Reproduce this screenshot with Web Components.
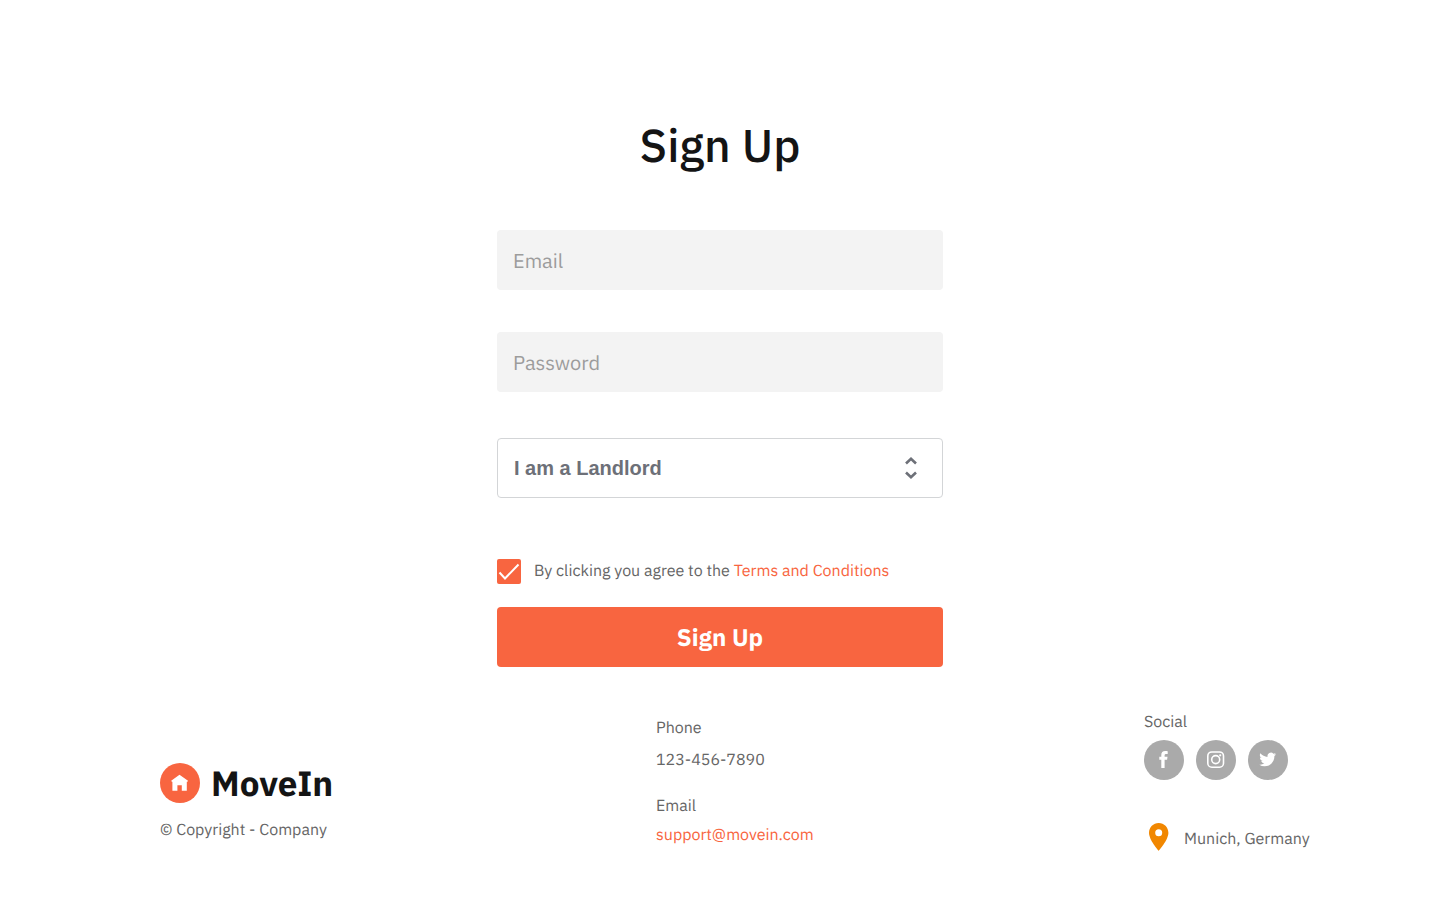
<!DOCTYPE html>
<html lang="en">
<head>
<meta charset="utf-8">
<meta name="viewport" content="width=device-width, initial-scale=1">
<title>MoveIn - Sign Up</title>
<style>
  :root { --accent: #f86540; --ink: #141414; --muted: #666; --hint: #9c9c9c; }
  body {
    margin: 0;
    background: #fff;
    color: var(--muted);
    font: 16px/20px "IBM Plex Sans", Roboto, sans-serif;
    text-rendering: geometricPrecision;
  }
</style>
</head>
<body>
<signup-page>
  <signup-form></signup-form>
  <site-footer slot="footer"></site-footer>
</signup-page>

<script>
const define = (name, html, setup) => {
  const template = document.createElement('template');
  template.innerHTML = html;
  customElements.define(name, class extends HTMLElement {
    connectedCallback() {
      if (this.shadowRoot) return;
      const root = this.attachShadow({ mode: 'open' });
      root.append(template.content.cloneNode(true));
      if (setup) setup(this, root);
    }
  });
};

define('signup-page', `
  <style>
    :host { display: flex; flex-direction: column; gap: 44px; min-height: 100vh; box-sizing: border-box; padding: 113px 0 48px; }
    main { box-sizing: border-box; width: 100%; max-width: 446px; margin: 0 auto; }
  </style>
  <main><slot></slot></main>
  <slot name="footer"></slot>
`);

define('text-field', `
  <style>
    :host { display: block; }
    input {
      display: block; box-sizing: border-box; width: 100%; height: 60px;
      padding: 0 16px; border: 0; border-radius: 4px; background: #f3f3f3;
      color: var(--ink); font: inherit; font-size: 20px; text-rendering: inherit;
    }
    input::placeholder { color: var(--hint); opacity: 1; }
  </style>
  <input>
`, (host, root) => {
  const input = root.querySelector('input');
  const label = host.getAttribute('label');
  input.type = host.getAttribute('type');
  input.placeholder = label;
  input.setAttribute('aria-label', label);
});

define('role-select', `
  <style>
    :host { display: grid; align-items: center; }
    select, svg { grid-area: 1 / 1; }
    select {
      appearance: none; box-sizing: border-box; width: 100%; height: 60px; padding: 0 16px;
      border: 1px solid #d3d5d7; border-radius: 4px; background: #fff; color: #6d7078;
      font: bold 20px "Liberation Sans", Arial, sans-serif;
    }
    svg { justify-self: end; margin-right: 25px; pointer-events: none; }
  </style>
  <select aria-label="Role"><option>I am a Landlord</option><option>I am a Tenant</option></select>
  <svg width="14" height="24" viewBox="0 0 14 24" fill="none" stroke="#6d7078" stroke-width="2.600" aria-hidden="true">
    <path d="M2 7.500 7 2.700l5 4.800M2 16.500l5 4.800 5-4.800"/>
  </svg>
`);

define('check-box', `
  <style>
    :host { display: flex; align-items: center; gap: 13px; }
    span { display: grid; flex: none; }
    input, svg { grid-area: 1 / 1; }
    input { appearance: none; width: 24px; height: 25px; margin: 0; border-radius: 2px; background: var(--accent); }
    svg { pointer-events: none; }
    input:not(:checked) + svg { visibility: hidden; }
    label { padding-bottom: 1px; }
  </style>
  <span>
    <input id="agree" type="checkbox" checked>
    <svg width="24" height="25" viewBox="0 0 24 25" fill="none" stroke="#fff" stroke-width="2" aria-hidden="true"><path d="m2.500 13.500 5.500 6L21.500 5.500"/></svg>
  </span>
  <label for="agree"><slot></slot></label>
`);

define('signup-form', `
  <style>
    :host { display: block; }
    h1 { margin: 0 0 53px; color: var(--ink); font-size: 46px; line-height: 64px; font-weight: 500; text-align: center; }
    form { display: flex; flex-direction: column; }
    .password { margin-top: 42px; }
    role-select { margin-top: 46px; }
    check-box { margin: 61px 0 23px; }
    a { color: var(--accent); text-decoration: none; }
    button {
      height: 60px; padding: 0 16px; border: 0; border-radius: 4px;
      background: var(--accent); color: #fff; font: inherit; font-size: 24px; font-weight: 700; text-rendering: inherit;
    }
  </style>
  <h1>Sign Up</h1>
  <form>
    <text-field type="email" label="Email"></text-field>
    <text-field class="password" type="password" label="Password"></text-field>
    <role-select></role-select>
    <check-box>By clicking you agree to the <a href="#terms">Terms and Conditions</a></check-box>
    <button type="button">Sign Up</button>
  </form>
`);

define('brand-logo', `
  <style>
    :host { display: flex; align-items: center; gap: 11px; color: var(--ink); font-size: 35px; line-height: 40px; font-weight: 700; }
    svg { flex: none; }
  </style>
  <svg width="40" height="40" viewBox="0 0 40 40" aria-hidden="true">
    <circle cx="20" cy="20" r="20" fill="#f86540"/>
    <path fill="#fff" d="M19.500 11.700 28 17.800l-.8 1.200-.4-.2V27.800h-5V22.300h-4.400v5.500h-5v-9l-.4.200-.8-1.200z"/>
  </svg>
  <span><slot></slot></span>
`);

define('social-link', `
  <style>
    :host { display: block; }
    a { display: block; width: 40px; height: 40px; border-radius: 50%; background: #aaa; color: #fff; }
    svg { display: block; }
  </style>
  <a href="#social"><svg width="40" height="40" viewBox="0 0 40 40" aria-hidden="true"></svg></a>
`, (host, root) => {
  const shapes = {
    Facebook: '<path fill="#fff" d="M17.300 28v-8.300h-2v-3h2V15c0-2.600 1.300-4.100 3.900-4.100.9 0 1.900.1 2.500.3v2.900h-1.500c-1.200 0-1.600.5-1.600 1.500v1.100h2.900l-.4 3h-2.500V28z"/>',
    Instagram: '<g fill="none" stroke="#fff"><rect x="11.800" y="12" width="15.700" height="15.200" rx="4" stroke-width="1.600"/><circle cx="19.700" cy="19.600" r="4" stroke-width="1.600"/></g><circle cx="24.200" cy="15.300" r="1.100" fill="#fff"/>',
    Twitter: '<path fill="#fff" transform="translate(11.300 11.100) scale(.7)" d="M23.950 4.570a10 10 0 0 1-2.820.77 4.960 4.960 0 0 0 2.160-2.720c-.95.550-2 .950-3.130 1.180a4.920 4.920 0 0 0-8.380 4.480C7.690 8.090 4.070 6.130 1.640 3.160a4.920 4.920 0 0 0 1.520 6.570 4.900 4.900 0 0 1-2.230-.61v.06a4.920 4.920 0 0 0 3.950 4.830 5 5 0 0 1-2.210.08 4.940 4.940 0 0 0 4.600 3.420A9.870 9.870 0 0 1 0 19.540a14 14 0 0 0 7.550 2.210c9.050 0 14-7.500 14-13.980 0-.21 0-.42-.02-.63a9.940 9.940 0 0 0 2.420-2.570z"/>'
  };
  const name = host.getAttribute('name');
  root.querySelector('a').setAttribute('aria-label', name);
  root.querySelector('svg').innerHTML = shapes[name];
});

define('map-place', `
  <style>
    :host { display: flex; align-items: center; gap: 15px; white-space: nowrap; }
    svg { flex: none; margin-left: 5px; }
    span { padding-top: 4px; }
  </style>
  <svg width="20" height="28" viewBox="0 0 20 28" aria-hidden="true">
    <path fill="#f18700" fill-rule="evenodd" d="M9.700 0C4.300 0 0 4.300 0 9.700 0 17 9.700 27.700 9.700 27.700S19.400 17 19.400 9.700C19.400 4.300 15.100 0 9.700 0zm0 6.200a3.500 3.500 0 1 1 0 7 3.500 3.500 0 0 1 0-7z"/>
  </svg>
  <span><slot></slot></span>
`);

define('site-footer', `
  <style>
    :host { display: block; }
    footer { display: grid; grid-template-columns: 124fr 122fr 164px; align-items: start; padding: 0 132px 0 160px; }
    p { margin: 0; }
    .brand { padding-top: 52px; }
    .brand p { margin-top: 17px; }
    .contact { padding-top: 7px; }
    .number { margin: 12px 0 26px; }
    .mail { margin-top: 9px; }
    .social { padding-top: 1px; }
    a { color: var(--accent); text-decoration: none; }
    nav { display: flex; gap: 12px; margin: 8px 0 43px; }
  </style>
  <footer>
    <div class="brand"><brand-logo>MoveIn</brand-logo><p>© Copyright - Company</p></div>
    <div class="contact">
      <p>Phone</p><p class="number">123-456-7890</p>
      <p>Email</p><p class="mail"><a href="mailto:support@movein.com">support@movein.com</a></p>
    </div>
    <div class="social">
      <p>Social</p>
      <nav aria-label="Social">
        <social-link name="Facebook"></social-link>
        <social-link name="Instagram"></social-link>
        <social-link name="Twitter"></social-link>
      </nav>
      <map-place>Munich, Germany</map-place>
    </div>
  </footer>
`);
</script>
</body>
</html>
